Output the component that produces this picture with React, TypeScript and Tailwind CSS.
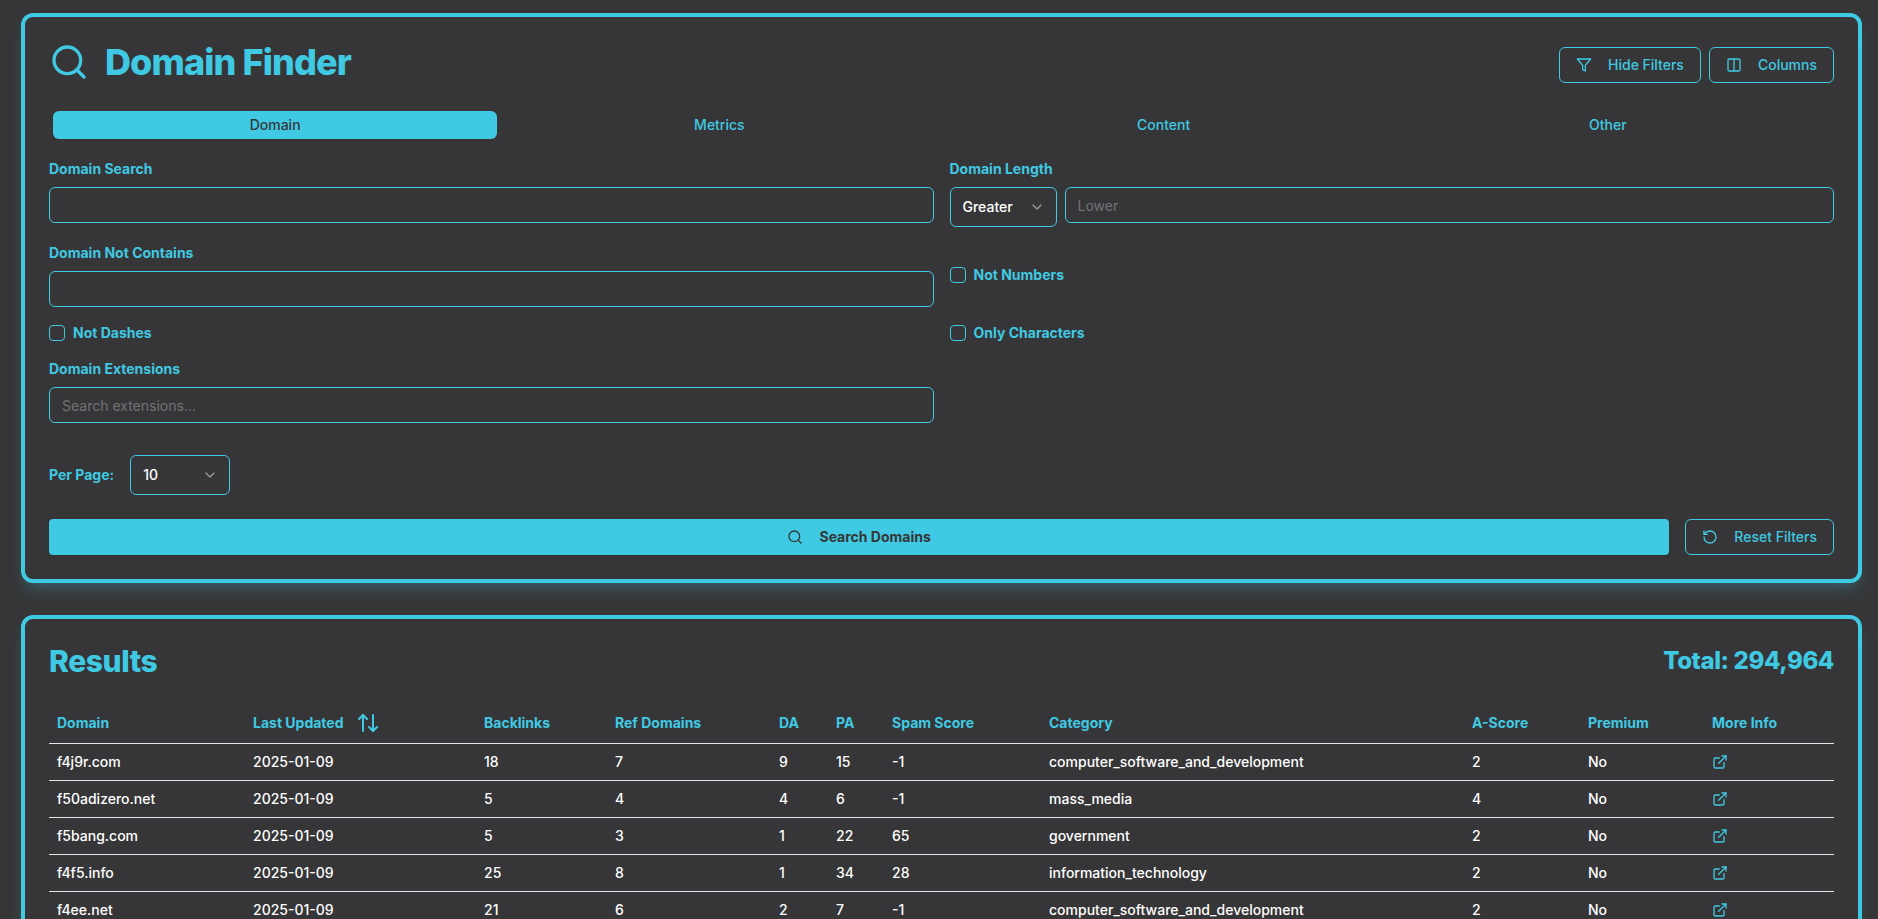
import React, { useState } from 'react';
import { ArrowUpDown, ChevronDown, Columns2, ExternalLink, RotateCcw, Search } from 'lucide-react';
import { FiFilter } from 'react-icons/fi';

const tabs = ['Domain', 'Metrics', 'Content', 'Other'];

const columns = [
  { label: 'Domain', width: 'w-[196px]' },
  { label: 'Last Updated', width: 'w-[231px]', sortable: true },
  { label: 'Backlinks', width: 'w-[131px]' },
  { label: 'Ref Domains', width: 'w-[164px]' },
  { label: 'DA', width: 'w-[57px]' },
  { label: 'PA', width: 'w-[56px]' },
  { label: 'Spam Score', width: 'w-[157px]' },
  { label: 'Category', width: 'w-[423px]' },
  { label: 'A-Score', width: 'w-[116px]' },
  { label: 'Premium', width: 'w-[124px]' },
  { label: 'More Info', width: 'w-[130px]' },
];

const rows = [
  ['f4j9r.com', '2025-01-09', '18', '7', '9', '15', '-1', 'computer_software_and_development', '2', 'No'],
  ['f50adizero.net', '2025-01-09', '5', '4', '4', '6', '-1', 'mass_media', '4', 'No'],
  ['f5bang.com', '2025-01-09', '5', '3', '1', '22', '65', 'government', '2', 'No'],
  ['f4f5.info', '2025-01-09', '25', '8', '1', '34', '28', 'information_technology', '2', 'No'],
  ['f4ee.net', '2025-01-09', '21', '6', '2', '7', '-1', 'computer_software_and_development', '2', 'No'],
];

function Panel({ children }: { children: React.ReactNode }) {
  return (
    <section className="rounded-xl border-4 border-[#40c9e2] bg-[#363638] p-6 shadow-lg shadow-[#40c9e2]/20">
      {children}
    </section>
  );
}

function OutlineButton({ icon, children }: { icon: React.ReactNode; children: React.ReactNode }) {
  return (
    <button
      type="button"
      className="flex h-9 shrink-0 items-center gap-4 rounded-md border border-[#40c9e2] px-4 text-sm font-medium whitespace-nowrap"
    >
      {icon}
      {children}
    </button>
  );
}

function TextField({ id, label, placeholder }: { id: string; label: string; placeholder?: string }) {
  return (
    <div className="flex flex-col gap-2">
      <label htmlFor={id} className="text-sm font-bold">{label}</label>
      <input
        id={id}
        type="text"
        placeholder={placeholder}
        className="h-9 w-full rounded-md border border-[#40c9e2] bg-transparent px-3 text-sm text-white placeholder:text-[#737375]"
      />
    </div>
  );
}

function SelectField({ id, label, options, width }: { id: string; label?: string; options: string[]; width: string }) {
  return (
    <div className={`relative shrink-0 ${width}`}>
      <select
        id={id}
        aria-label={label}
        className="h-10 w-full appearance-none rounded-md border border-[#40c9e2] bg-transparent px-3 text-sm font-medium text-white"
      >
        {options.map((o) => (
          <option key={o}>{o}</option>
        ))}
      </select>
      <ChevronDown size={16} className="pointer-events-none absolute top-3 right-3 text-white opacity-50" />
    </div>
  );
}

function CheckField({ id, label }: { id: string; label: string }) {
  return (
    <div className="flex items-center gap-2">
      <input
        id={id}
        type="checkbox"
        className="size-4 appearance-none rounded-sm border border-[#40c9e2] checked:bg-[#40c9e2]"
      />
      <label htmlFor={id} className="text-sm font-bold">{label}</label>
    </div>
  );
}

export default function App() {
  const [tab, setTab] = useState('Domain');

  return (
    <main className="flex min-h-screen flex-col gap-8 bg-[#363638] pt-[13px] pr-4 pb-8 pl-[21px] font-['Inter',sans-serif] text-[#40c9e2]">
      <Panel>
        <header className="flex items-start justify-between">
          <div className="flex h-[42px] items-center gap-4">
            <Search size={40} />
            <h1 className="text-4xl font-extrabold tracking-tight">Domain Finder</h1>
          </div>
          <div className="flex gap-2 pt-1.5">
            <OutlineButton icon={<FiFilter size={16} />}>Hide Filters</OutlineButton>
            <OutlineButton icon={<Columns2 size={16} />}>Columns</OutlineButton>
          </div>
        </header>

        <div role="tablist" className="mt-6 grid grid-cols-4 p-1">
          {tabs.map((t) => (
            <button
              key={t}
              type="button"
              role="tab"
              aria-selected={t === tab}
              onClick={() => setTab(t)}
              className={`rounded-md py-1 text-sm font-medium ${t === tab ? 'bg-[#40c9e2] text-[#363638]' : ''}`}
            >
              {t}
            </button>
          ))}
        </div>

        {/* Filters */}
        <div className="mt-4 grid grid-cols-2 gap-4">
          <TextField id="search" label="Domain Search" />
          <div className="flex flex-col gap-2">
            <label htmlFor="length" className="text-sm font-bold">Domain Length</label>
            <div className="flex gap-2">
              <SelectField id="length-op" label="Length comparison" options={['Greater', 'Less', 'Between']} width="w-[107px]" />
              <input
                id="length"
                type="text"
                placeholder="Lower"
                className="h-9 w-full rounded-md border border-[#40c9e2] bg-transparent px-3 text-sm text-white placeholder:text-[#737375]"
              />
            </div>
          </div>
          <TextField id="not-contains" label="Domain Not Contains" />
          <CheckField id="not-numbers" label="Not Numbers" />
          <CheckField id="not-dashes" label="Not Dashes" />
          <CheckField id="only-chars" label="Only Characters" />
          <TextField id="extensions" label="Domain Extensions" placeholder="Search extensions..." />
        </div>

        <div className="mt-8 flex items-center gap-4">
          <label htmlFor="per-page" className="text-sm font-bold">Per Page:</label>
          <SelectField id="per-page" options={['10', '25', '50', '100']} width="w-[100px]" />
        </div>

        <div className="mt-6 flex gap-4">
          <button
            type="button"
            className="flex h-9 flex-1 items-center justify-center gap-4 rounded-sm bg-[#40c9e2] text-sm font-bold text-[#363638] shadow-sm"
          >
            <Search size={16} />
            Search Domains
          </button>
          <OutlineButton icon={<RotateCcw size={16} />}>Reset Filters</OutlineButton>
        </div>
      </Panel>

      <Panel>
        <header className="flex items-center justify-between font-extrabold tracking-tight">
          <h2 className="text-3xl">Results</h2>
          <p className="text-2xl">Total: 294,964</p>
        </header>

        <table className="mt-6 w-full table-fixed text-left text-sm">
          <thead>
            <tr className="border-b border-gray-200">
              {columns.map((c) => (
                <th key={c.label} scope="col" className={`h-10 px-2 font-bold ${c.width}`}>
                  {c.sortable ? (
                    <button type="button" className="flex items-center gap-3">
                      {c.label}
                      <ArrowUpDown size={24} />
                    </button>
                  ) : (
                    c.label
                  )}
                </th>
              ))}
            </tr>
          </thead>
          <tbody className="font-medium text-white">
            {rows.map((row) => (
              <tr key={row[0]} className="border-b border-gray-200">
                {row.map((cell, i) => (
                  <td key={i} className="p-2">{cell}</td>
                ))}
                <td className="p-2">
                  <a href="#" aria-label={`More info on ${row[0]}`} className="block text-[#40c9e2]">
                    <ExternalLink size={16} />
                  </a>
                </td>
              </tr>
            ))}
          </tbody>
        </table>
      </Panel>
    </main>
  );
}
